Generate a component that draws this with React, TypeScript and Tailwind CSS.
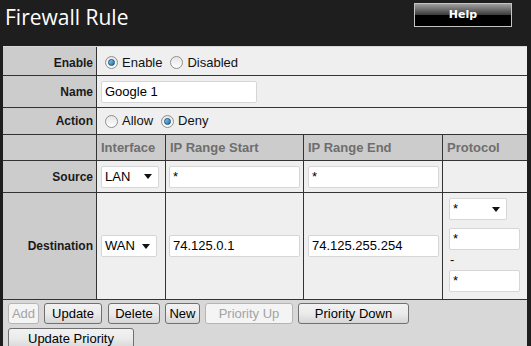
import { ReactNode } from 'react';

function Radio({ checked, className = '' }: { checked?: boolean; className?: string }) {
  return (
    <span
      className={`${className} inline-flex h-[13px] w-[13px] items-center justify-center rounded-full border border-[#8f8f8f] bg-gradient-to-b from-[#e6e6e6] to-[#fdfdfd]`}
    >
      {checked && (
        <span className="h-[7px] w-[7px] rounded-full border border-[#1d4f7a] bg-gradient-to-br from-[#7fd2f6] to-[#1a6ea8]" />
      )}
    </span>
  );
}

function TextBox({ value, w }: { value: string; w: string }) {
  return (
    <div className={`${w} h-[22px] flex items-center rounded-[2px] border border-[#d6d6d6] bg-white px-[3px] text-[13px] text-black`}>
      {value}
    </div>
  );
}

function Select({ value, w }: { value: string; w: string }) {
  return (
    <div className={`${w} h-[22px] flex items-center justify-between rounded-[2px] border border-[#d6d6d6] bg-white pl-[3px] pr-[6px] text-[13px] text-black`}>
      <span>{value}</span>
      <svg width="8" height="5" viewBox="0 0 8 5">
        <path d="M0 0h8L4 5z" fill="#111" />
      </svg>
    </div>
  );
}

function Btn({ children, disabled, w }: { children: ReactNode; disabled?: boolean; w: string }) {
  return (
    <div
      className={`${w} h-[21px] flex items-center justify-center rounded-[3px] border text-[13px] ${
        disabled
          ? 'border-[#b5b5b5] bg-[#f4f4f4] text-[#a3a3a3]'
          : 'border-[#707070] bg-gradient-to-b from-[#f2f2f2] via-[#ebebeb] to-[#d6d6d6] text-black'
      }`}
    >
      {children}
    </div>
  );
}

function Label({ children, className = '' }: { children: ReactNode; className?: string }) {
  return (
    <div className={`${className} bg-[#cccccc] flex items-center justify-end pr-[3px] text-[12px] font-bold text-[#1a1a1a]`}>
      {children}
    </div>
  );
}

export default function App() {
  return (
    <div
      className="w-[531px] h-[346px] overflow-hidden bg-[#1e1e1e] flex flex-col"
      style={{ fontFamily: '"Liberation Sans", Arial, sans-serif' }}
    >
      {/* Header */}
      <div className="h-[46px] shrink-0 flex justify-between items-start">
        <h1
          className="pl-[5px] pt-[4px] text-[21px] leading-[26px] text-white"
          style={{ fontFamily: '"Open Sans", "Noto Sans", sans-serif' }}
        >
          Firewall Rule
        </h1>
        <div
          className="mt-[3px] mr-[19px] w-[98px] h-[24px] border border-[#c4c4c4] bg-[linear-gradient(#a0a0a0,#3a3a3a_50%,#000_50%,#000)] flex items-center justify-center text-[11px] font-bold text-white"
          style={{ fontFamily: '"DejaVu Sans", Verdana, sans-serif' }}
        >
          Help
        </div>
      </div>

      {/* Table */}
      <div className="shrink-0 ml-[3px] mr-[4px] grid grid-cols-[93px_68px_137px_138px_84px] grid-rows-[28px_31px_26px_25px_31px_106px] gap-px bg-[#333333] border-t border-[#d8d8d8]">
        <Label className="pt-[3px]">Enable</Label>
        <div className="col-span-4 bg-[#efefef] flex items-center pt-[3px] pl-[8px] gap-[4px] text-[13px] text-[#111]">
          <Radio checked />
          <span>Enable</span>
          <Radio className="ml-[4px]" />
          <span>Disabled</span>
        </div>

        <Label>Name</Label>
        <div className="col-span-4 bg-[#efefef] flex items-center pl-[4px]">
          <TextBox value="Google 1" w="w-[156px]" />
        </div>

        <Label>Action</Label>
        <div className="col-span-4 bg-[#efefef] flex items-center pl-[8px] gap-[4px] text-[13px] text-[#111]">
          <Radio />
          <span>Allow</span>
          <Radio checked className="ml-[4px]" />
          <span>Deny</span>
        </div>

        <div className="bg-[#cccccc]" />
        {['Interface', 'IP Range Start', 'IP Range End', 'Protocol'].map((h) => (
          <div key={h} className="bg-[#cccccc] flex items-center pl-[4px] text-[13px] font-bold text-[#6e6e6e]">
            {h}
          </div>
        ))}

        <Label>Source</Label>
        <div className="bg-[#efefef] flex items-center pl-[4px]">
          <Select value="LAN" w="w-[58px]" />
        </div>
        <div className="bg-[#efefef] flex items-center pl-[3px]">
          <TextBox value="*" w="w-[131px]" />
        </div>
        <div className="bg-[#efefef] flex items-center pl-[4px]">
          <TextBox value="*" w="w-[131px]" />
        </div>
        <div className="bg-[#efefef]" />

        <Label>Destination</Label>
        <div className="bg-[#efefef] flex items-center pl-[4px]">
          <Select value="WAN" w="w-[56px]" />
        </div>
        <div className="bg-[#efefef] flex items-center pl-[3px]">
          <TextBox value="74.125.0.1" w="w-[131px]" />
        </div>
        <div className="bg-[#efefef] flex items-center pl-[4px]">
          <TextBox value="74.125.255.254" w="w-[131px]" />
        </div>
        <div className="bg-[#efefef] flex flex-col pl-[6px] pt-[5px]">
          <Select value="*" w="w-[58px]" />
          <div className="mt-[8px]">
            <TextBox value="*" w="w-[71px]" />
          </div>
          <div className="h-[20px] leading-[20px] pl-[1px] text-[13px] text-[#111]">-</div>
          <TextBox value="*" w="w-[71px]" />
        </div>
      </div>

      {/* Buttons */}
      <div className="ml-[3px] mr-[4px] flex-1 bg-[#d8d8d8] border-t border-[#333333] pt-[3px] pl-[5px]">
        <div className="flex">
          <Btn disabled w="w-[31px]">Add</Btn>
          <div className="ml-[5px]">
            <Btn w="w-[58px]">Update</Btn>
          </div>
          <div className="ml-[6px]">
            <Btn w="w-[52px]">Delete</Btn>
          </div>
          <div className="ml-[5px]">
            <Btn w="w-[35px]">New</Btn>
          </div>
          <div className="ml-[5px]">
            <Btn disabled w="w-[88px]">Priority Up</Btn>
          </div>
          <div className="ml-[5px]">
            <Btn w="w-[111px]">Priority Down</Btn>
          </div>
        </div>
        <div className="mt-[4px] flex">
          <Btn w="w-[126px]">Update Priority</Btn>
        </div>
      </div>
    </div>
  );
}
